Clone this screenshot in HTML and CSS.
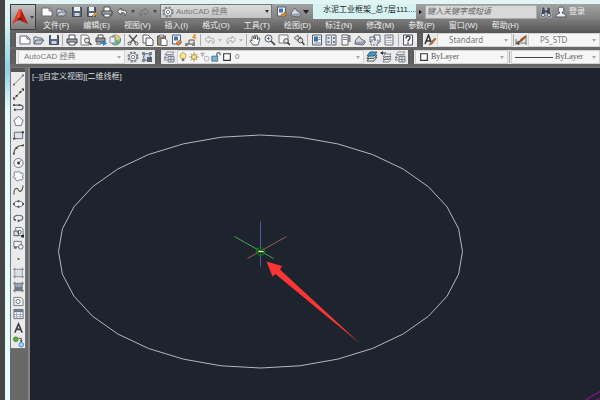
FILE: index.html
```
<!DOCTYPE html>
<html lang="zh-CN">
<head>
<meta charset="utf-8">
<title>AutoCAD</title>
<link rel="stylesheet" href="styles.css">
</head>
<body>
<svg class="sprite" aria-hidden="true">
  <symbol id="new" viewBox="0 0 12 12"><path d="M1 2h7l3 3v5H1z" fill="#fdfdfd" stroke="#666b76"/><path d="M8 2v3h3" fill="none" stroke="#666b76"/></symbol>
  <symbol id="open" viewBox="0 0 12 12"><path d="M1 10V3h3l1 1h4v2" fill="#dfe3ea" stroke="#596273"/><path d="M1 10l2-4h8l-3 4z" fill="#c3cad6" stroke="#596273"/></symbol>
  <symbol id="save" viewBox="0 0 12 12"><path d="M1.500 1.500h9v9h-9z" fill="#56657b" stroke="#3d4a5e"/><path d="M3 1h6v4H3z" fill="#eef1f5"/><path d="M3.500 7h5v3h-5z" fill="#cbd2dc"/></symbol>
  <symbol id="saveas" viewBox="0 0 12 12"><path d="M1.500 1.500h8v9h-8z" fill="#56657b" stroke="#3d4a5e"/><path d="M3 1h5v4H3zM3 7h5v3H3z" fill="#eef1f5"/><path d="M6 10l4-4 1.500 1.500-4 3.500z" fill="#e7a83e" stroke="#8b5a20" stroke-width=".5"/></symbol>
  <symbol id="print" viewBox="0 0 12 12"><path d="M3 5V1h6v4" fill="#fff" stroke="#4b4f57"/><path d="M1 5h10v4H1z" fill="#9da2ab" stroke="#3f434b"/><path d="M3 8h6v3H3z" fill="#fff" stroke="#4b4f57"/></symbol>
  <symbol id="preview" viewBox="0 0 12 12"><path d="M1 1h6l2 2v8H1z" fill="#fff" stroke="#777"/><circle cx="7" cy="6.500" r="2.500" fill="#dbe5ee" stroke="#4e545e"/><path d="M9 8.500l2.500 2.500" stroke="#444" stroke-width="1.500"/></symbol>
  <symbol id="publish" viewBox="0 0 12 12"><path d="M3 4V1h5v3" fill="#fff" stroke="#555"/><path d="M1 4h9v4H1z" fill="#8e949e" stroke="#444"/><path d="M1 10h5" stroke="#555"/><path d="M6 8h2V6l4 3.500L8 12v-2H6z" fill="#2b83cf"/></symbol>
  <symbol id="globe" viewBox="0 0 12 12"><circle cx="6.500" cy="6" r="5" fill="#8ec7de" stroke="#657780"/><path d="M6 1c3 0 5 2 5 4L7 6z" fill="#f0cf5c"/><path d="M7 6l4 1c0 2-2 4-4 4z" fill="#68ad6b"/><path d="M1 3h5v6H1z" fill="#eef1f5" stroke="#687079" stroke-width=".7"/></symbol>
  <symbol id="cut" viewBox="0 0 12 12"><path d="M2 1l7 8M10 1L3 9" stroke="#4a4e56" stroke-width="1.300"/><circle cx="2.500" cy="9.500" r="1.500" fill="none" stroke="#555"/><circle cx="9.500" cy="9.500" r="1.500" fill="none" stroke="#555"/></symbol>
  <symbol id="copy" viewBox="0 0 12 12"><path d="M1 1h5l2 2v6H1z" fill="#fff" stroke="#666"/><path d="M4 4h5l2 2v5.500H4z" fill="#fff" stroke="#555"/></symbol>
  <symbol id="paste" viewBox="0 0 12 12"><path d="M1.500 2h8v9h-8z" fill="#998a78" stroke="#5f5a55"/><path d="M3.500 1h4v2h-4z" fill="#ddd" stroke="#666" stroke-width=".7"/><path d="M5 4.500h4l2 2v5H5z" fill="#fff" stroke="#666"/></symbol>
  <symbol id="match" viewBox="0 0 12 12"><path d="M1.500 1h8v9h-8z" fill="#f5f7fa" stroke="#4b5e7c"/><path d="M3 2.500h4v4H3z" fill="#3c76b5"/><path d="M5 9l4-3 2 2-4 3.500z" fill="#dd8b35" stroke="#875228" stroke-width=".6"/></symbol>
  <symbol id="block" viewBox="0 0 12 12"><path d="M1 10h8V6H4v4" fill="none" stroke="#555"/><path d="M0 9h3v3H0zM7 9h3v3H7z" fill="#888"/><path d="M9 0L7 4h2L8 7l4-4h-2l1-3z" fill="#e99b3e"/></symbol>
  <symbol id="undo" viewBox="0 0 12 12"><path d="M5 2L1 5.500 5 9V7c3-1 4 0 4 3 3-4 1-6-4-6z" fill="#eee" stroke="currentColor"/></symbol>
  <symbol id="redo" viewBox="0 0 12 12"><path d="M7 2l4 3.500L7 9V7c-3-1-4 0-4 3-3-4-1-6 4-6z" fill="none" stroke="currentColor"/></symbol>
  <symbol id="hand" viewBox="0 0 12 12"><path d="M4 11L1 7c0-1 1-1 2 0V3c0-1 1-1 1.500 0L5 5V2c0-1 1.300-1 1.500 0v3L7 2c.2-1 1.500-1 1.500 0v4l1-2c.7-1 1.500 0 1.300 1L9 11z" fill="#f8f8f8" stroke="#4d525c" stroke-width=".9"/></symbol>
  <symbol id="zoom" viewBox="0 0 12 12"><circle cx="4.500" cy="4.500" r="3.500" fill="#e4ebf1" stroke="#59616e"/><path d="M3 4.500h3M4.500 3v3" stroke="#59616e" stroke-width=".8"/><path d="M7 7l4 4" stroke="#444" stroke-width="1.700"/></symbol>
  <symbol id="zoomwin" viewBox="0 0 12 12"><path d="M1 1h9v8H1z" fill="#fafafa" stroke="#777"/><circle cx="8" cy="7" r="2.300" fill="#dde4eb" stroke="#555"/><path d="M9.500 8.500L12 11" stroke="#333" stroke-width="1.500"/></symbol>
  <symbol id="zoomprev" viewBox="0 0 12 12"><path d="M5 1L1 4l4 3V5h3V3H5z" fill="#ddd" stroke="#555" stroke-width=".8"/><circle cx="7.500" cy="6.500" r="2.300" fill="#dde4eb" stroke="#555"/><path d="M9 8l2.500 3" stroke="#444" stroke-width="1.500"/></symbol>
  <symbol id="props" viewBox="0 0 12 12"><path d="M1.500 1h9v10h-9z" fill="#f5f7fa" stroke="#536177"/><path d="M3 2.500h4v5H3z" fill="#3573ac"/><path d="M7.500 3.500h2M7.500 5.500h2M3 9h6.500" stroke="#667" stroke-width=".8"/></symbol>
  <symbol id="design" viewBox="0 0 12 12"><path d="M1 1h10v10H1z" fill="#e0e4ea" stroke="#666d79"/><path d="M2.500 3h2v2h-2zM6 2h1v8H6zM8 3h2v2H8zM2.500 7h2v2h-2zM8 7h2v2H8z" fill="#7c8696"/></symbol>
  <symbol id="palette" viewBox="0 0 12 12"><path d="M2 1h6v10H2z" fill="#f5f5f5" stroke="#666"/><path d="M8 1h2.500v7H8zM3 3h4v1H3zM3 5h4v1H3z" fill="#7b818b"/></symbol>
  <symbol id="sheet" viewBox="0 0 12 12"><path d="M1 7l4-5 2 3 4 2-3 2H3z" fill="#d7dce3" stroke="#656c78"/><path d="M1 8v2l8 1 2-2V7" fill="#9ea6b1" stroke="#656c78"/></symbol>
  <symbol id="markup" viewBox="0 0 12 12"><path d="M1 3h5v5H1zM5 1h6v7H5z" fill="#f7f7f7" stroke="#5d6572"/><path d="M2 6h7v5H2z" fill="#dde2ea" stroke="#5d6572" stroke-dasharray="2 1"/></symbol>
  <symbol id="calc" viewBox="0 0 12 12"><path d="M2 1h8v10H2z" fill="#f2f3f5" stroke="#6c727c"/><path d="M3.500 2.500h5v2h-5z" fill="#8c98aa"/><path d="M3.500 6.500h5M3.500 8.500h5" stroke="#777" stroke-dasharray="1 1"/></symbol>
  <symbol id="gear" viewBox="0 0 12 12"><circle cx="6" cy="6" r="4.700" fill="none" stroke="#7d828a" stroke-width="1.800" stroke-dasharray="2.200 1.490"/><circle cx="6" cy="6" r="3.900" fill="#f3f3f3" stroke="#7d828a"/><circle cx="6" cy="6" r="1.700" fill="#fff" stroke="#7d828a"/></symbol>
  <symbol id="wsave" viewBox="0 0 12 12"><path d="M1 1h3v3H1zM8 1h3v3H8zM1 8h3v3H1z" fill="#7a8594"/><circle cx="6" cy="6" r="3.500" fill="#d6dce3" stroke="#5d6571"/><path d="M6 6h5v5H6z" fill="#53647b"/></symbol>
  <symbol id="layers" viewBox="0 0 12 12"><path d="M4 1h7L9 3.500H2zM4 4h7" fill="#f5f5f5" stroke="#707783" stroke-width=".8"/><path d="M4 4L1 6.500h3M2.500 7L1 9h3" fill="none" stroke="#707783" stroke-width=".8"/><path d="M5 5.500h6V11H5z" fill="#d9e5ec" stroke="#606773" stroke-width=".8"/><path d="M5 8.500h6M8 6v5" stroke="#606773" stroke-width=".7"/></symbol>
  <symbol id="layerblue" viewBox="0 0 12 12"><path d="M4 6h7l-3 4H1z" fill="#f5f5f5" stroke="#555"/><path d="M4 4h7L8 7.500H1z" fill="#ccd8e1" stroke="#555"/><path d="M4 1h7L8 5H1z" fill="#3f9bd0" stroke="#315c7a"/></symbol>
  <symbol id="layerprev" viewBox="0 0 12 12"><path d="M5 8h6l-2 3H3zM5 5.500h6l-2 3H3zM5 3h6L9 6H3z" fill="#f5f5f5" stroke="#606773" stroke-width=".8"/><path d="M0 2l3-2v1.500h3v1H3V4z" fill="#333"/></symbol>
  <symbol id="help" viewBox="0 0 12 12"><path d="M1.500 1h9v10h-9z" fill="#f7f7f7" stroke="#4a525e"/><path d="M4 4.500c0-3 4-3 4-.5C8 5.500 6 5.500 6 7.500M6 8.500V10" fill="none" stroke="#303641" stroke-width="1.300"/></symbol>
  <symbol id="textstyle" viewBox="0 0 12 12"><path d="M1 10L4.500 1 7 8M2.500 7H6" fill="none" stroke="#30343b" stroke-width="1.500"/><path d="M5 11l2-3 4-4 1 1-4 5z" fill="#b87033" stroke="#70401f" stroke-width=".5"/></symbol>
  <symbol id="dimstyle" viewBox="0 0 12 12"><path d="M1 5v6M11 1v10M1 9h10M1 9l3-2v4z" fill="#555" stroke="#555" stroke-width=".8"/><path d="M4 8l2-3 4-3 1 1-4 4z" fill="#b85b22" stroke="#7a3f1d" stroke-width=".6"/></symbol>
  <symbol id="bulb" viewBox="0 0 12 12"><path d="M4 8C1 5 3 1 6 1s5 4 2 7z" fill="#ffe784" stroke="#887637" stroke-width=".8"/><path d="M4.500 8h3v3h-3z" fill="#777"/></symbol>
  <symbol id="sun" viewBox="0 0 12 12"><path d="M6 0v12M0 6h12M2 2l8 8M10 2l-8 8" stroke="#a58d4b"/><circle cx="6" cy="6" r="3" fill="#f9e388" stroke="#9a8548"/></symbol>
  <symbol id="freeze" viewBox="0 0 12 12"><path d="M0 2h6M3 0v6M1 1l4 4M5 1L1 5" stroke="#aaa"/><circle cx="8" cy="8" r="3" fill="#eee" stroke="#aaa"/></symbol>
  <symbol id="lock" viewBox="0 0 12 12"><path d="M7 6V3c0-3 4-3 4 0v1" fill="none" stroke="#526472" stroke-width="1.400"/><path d="M1 5h7v6H1z" fill="#78b6d6" stroke="#42677d"/></symbol>
  <symbol id="swatch" viewBox="0 0 12 12"><path d="M2 2h8v8H2z" fill="#fff" stroke="#333" stroke-width="1.300"/></symbol>
  <symbol id="binoculars" viewBox="0 0 12 12"><path d="M2 1h3v3h2V1h3l1.500 10H7V7H5v4H.5z" fill="#424b5b" stroke="#dfe3e8" stroke-width=".6"/><path d="M2 8h2v2H2zM8 8h2v2H8z" fill="#d7dce3"/></symbol>
  <symbol id="person" viewBox="0 0 12 12"><path d="M1 11c0-3 2-3 4-4C2 4 3 1 6 1s4 3 1 6c2 1 4 1 4 4z" fill="#eef1f5" stroke="#4c5768"/></symbol>
  <symbol id="line" viewBox="0 0 12 12"><path d="M1 11L11 1" stroke="#777"/><path d="M0 10h2v2H0zM10 0h2v2h-2z" fill="#666"/></symbol>
  <symbol id="xline" viewBox="0 0 12 12"><path d="M1 11L11 1" stroke="#555"/><path d="M3 7h2v2H3zM7 3h2v2H7zM0 12V9l3 3zM12 0v3L9 0z" fill="#333"/></symbol>
  <symbol id="pline" viewBox="0 0 12 12"><path d="M1 4h7c4 0 4 5 0 5H2" fill="none" stroke="#596273" stroke-width="1.200"/><path d="M0 3h2v2H0zM1 8h2v2H1zM6 3h2v2H6z" fill="#444"/></symbol>
  <symbol id="polygon" viewBox="0 0 12 12"><path d="M6 1l5 4-2 6H3L1 5z" fill="#f7f8fa" stroke="#69707c"/></symbol>
  <symbol id="rect" viewBox="0 0 12 12"><path d="M1.500 3h9v7h-9z" fill="#dfe4ea" stroke="#596273"/><path d="M0 9h2.500v2H0zM9.500 2H12v2H9.500z" fill="#444"/></symbol>
  <symbol id="arc" viewBox="0 0 12 12"><path d="M1 11c0-5 3-9 10-9" fill="none" stroke="#555" stroke-width="1.200"/><path d="M0 10h2v2H0zM3 4h2v2H3zM10 1h2v2h-2z" fill="#444"/></symbol>
  <symbol id="circle" viewBox="0 0 12 12"><circle cx="6" cy="6" r="5" fill="#f6f7f9" stroke="#686f7b"/><path d="M6 6l3-3M5 5h2v2H5z" stroke="#555"/></symbol>
  <symbol id="cloud" viewBox="0 0 12 12"><path d="M4 2c3-2 4 0 4 1 4-1 4 2 2 3 2 3 0 5-3 4-2 3-5 0-4-1-4-1-2-4-1-4C0 3 2 0 4 2z" fill="#f7f8fa" stroke="#69707c"/></symbol>
  <symbol id="spline" viewBox="0 0 12 12"><path d="M1 11C1 2 5 4 6 6s4 3 5-5" fill="none" stroke="#555" stroke-width="1.200"/></symbol>
  <symbol id="ellipse" viewBox="0 0 12 12"><ellipse cx="6" cy="6" rx="5" ry="3" fill="#f7f8fa" stroke="#5f6774"/><path d="M0 5h2v2H0zM10 5h2v2h-2zM5 2h2v2H5zM5 8h2v2H5z" fill="#555"/></symbol>
  <symbol id="earc" viewBox="0 0 12 12"><path d="M2 8C-1 5 3 3 6 3c6 0 6 5 1 6" fill="none" stroke="#5f6774" stroke-width="1.300"/><path d="M5 8h2v2H5zM1 7h2v2H1z" fill="#444"/></symbol>
  <symbol id="insert" viewBox="0 0 12 12"><path d="M3 1h6l2 2v7H3z" fill="#fafafa" stroke="#697180"/><path d="M1 5h5v5H1z" fill="#dce1e8" stroke="#555"/><circle cx="7" cy="6" r="2" fill="none" stroke="#555"/><path d="M9 9h3v3H9z" fill="#222"/></symbol>
  <symbol id="makeblock" viewBox="0 0 12 12"><path d="M1 2h8v6H1z" fill="#f5f5f5" stroke="#626b79"/><circle cx="8.500" cy="8" r="2.500" fill="#edf0f4" stroke="#626b79"/><path d="M1 8h3v2H1z" fill="#666"/></symbol>
  <symbol id="point" viewBox="0 0 12 12"><path d="M5 5h2v2H5z" fill="#555"/></symbol>
  <symbol id="hatch" viewBox="0 0 12 12"><path d="M2 2h8v8H2z" fill="#f3f3f3"/><path d="M2 0v12M10 0v12M0 2h12M0 10h12" stroke="#7d8490"/><path d="M3 6l3-3M3 9l6-6M6 9l3-3" stroke="#929aa6" stroke-width=".7"/></symbol>
  <symbol id="gradient" viewBox="0 0 12 12"><path d="M2 2h8v8H2z" fill="#9ba4b1"/><path d="M2 6h8v4H2z" fill="#707c8c"/><path d="M2 0v12M10 0v12M0 2h12M0 10h12" stroke="#6d7480"/></symbol>
  <symbol id="region" viewBox="0 0 12 12"><path d="M1 2h6c3 0 4 2 4 4v5H1z" fill="#eef0f3" stroke="#727b89"/><circle cx="5.500" cy="6.500" r="2.200" fill="#fff" stroke="#626b79"/></symbol>
  <symbol id="table" viewBox="0 0 12 12"><path d="M1 1h10v10H1z" fill="#fff" stroke="#5f6b7c"/><path d="M1 1h10v3H1z" fill="#6e7c90"/><path d="M1 6.500h10M1 9h10M4 4v7M8 4v7" stroke="#8a95a6" stroke-width=".8"/></symbol>
  <symbol id="mtext" viewBox="0 0 12 12"><path d="M2 11L6 1.500 10 11M3.500 7.500h5" fill="none" stroke="#3c3f45" stroke-width="1.700"/></symbol>
  <symbol id="addsel" viewBox="0 0 12 12"><circle cx="3" cy="3" r="2.700" fill="#5caa3b" stroke="#397626" stroke-width=".6"/><path d="M6 2h3v3M8 4l1 2 1-2" fill="none" stroke="#444"/><circle cx="9" cy="9" r="2.500" fill="#a6d9fa" stroke="#2d8bc9"/></symbol>
</svg>

<div class="desktop">
  <div class="window">
    <header class="head">
      <button class="app" aria-label="应用程序菜单">
        <svg class="logo" viewBox="0 0 16 18" aria-hidden="true"><path d="M7 1L0 16l5-3 3-5z" fill="#e33a25"/><path d="M7 1h2l7 15-5-2-4-7z" fill="#bd1d13"/><path d="M5 13l3-6 3 7-3-2z" fill="#7d0f0b"/><path d="M7 1L5 9l3 1 1-9z" fill="#f0513a"/></svg>
        <span class="caret"></span>
      </button>
      <div class="bars">
        <div class="titlebar">
          <div class="quick">
            <button aria-label="新建"><svg><use href="#new"/></svg></button>
            <button aria-label="打开"><svg><use href="#open"/></svg></button>
            <button aria-label="保存"><svg><use href="#save"/></svg></button>
            <button aria-label="另存为"><svg><use href="#saveas"/></svg></button>
            <button aria-label="打印"><svg><use href="#print"/></svg></button>
            <button class="history" aria-label="放弃"><svg><use href="#undo"/></svg></button>
            <span class="caret"></span>
            <button class="history next" aria-label="重做"><svg><use href="#redo"/></svg></button>
            <span class="caret"></span>
          </div>
          <div class="field workspace"><svg><use href="#gear"/></svg><select aria-label="工作空间"><option>AutoCAD 经典</option></select></div>
          <div class="extras">
            <button aria-label="特性匹配"><svg><use href="#match"/></svg></button>
            <button aria-label="图纸集"><svg><use href="#sheet"/></svg></button>
            <span class="caret big"></span>
          </div>
          <div class="title">水泥工业框架_总7层111....</div>
          <div class="info">
            <span class="play"></span>
            <input type="text" placeholder="键入关键字或短语" aria-label="搜索">
            <button aria-label="查找"><svg><use href="#binoculars"/></svg></button>
            <button class="login"><svg><use href="#person"/></svg>登录</button>
          </div>
        </div>
        <nav class="menu">
          <a href="#">文件(F)</a><a href="#">编辑(E)</a><a href="#">视图(V)</a><a href="#">插入(I)</a><a href="#">格式(O)</a><a href="#">工具(T)</a><a href="#">绘图(D)</a><a href="#">标注(N)</a><a href="#">修改(M)</a><a href="#">参数(P)</a><a href="#">窗口(W)</a><a href="#">帮助(H)</a>
        </nav>
      </div>
    </header>

    <div class="row">
      <div class="toolbar standard">
        <span class="grip"></span>
        <button aria-label="新建"><svg><use href="#new"/></svg></button>
        <button aria-label="打开"><svg><use href="#open"/></svg></button>
        <button aria-label="保存"><svg><use href="#save"/></svg></button>
        <span class="sep"></span>
        <button aria-label="打印"><svg><use href="#print"/></svg></button>
        <button aria-label="打印预览"><svg><use href="#preview"/></svg></button>
        <button aria-label="发布"><svg><use href="#publish"/></svg></button>
        <button aria-label="三维打印"><svg><use href="#globe"/></svg></button>
        <span class="sep"></span>
        <button aria-label="剪切"><svg><use href="#cut"/></svg></button>
        <button aria-label="复制"><svg><use href="#copy"/></svg></button>
        <button aria-label="粘贴"><svg><use href="#paste"/></svg></button>
        <button aria-label="特性匹配"><svg><use href="#match"/></svg></button>
        <button aria-label="块编辑器"><svg><use href="#block"/></svg></button>
        <span class="sep"></span>
        <button class="off" aria-label="放弃"><svg><use href="#undo"/></svg></button>
        <span class="caret pale"></span>
        <button class="off" aria-label="重做"><svg><use href="#redo"/></svg></button>
        <span class="caret pale"></span>
        <span class="sep"></span>
        <button aria-label="平移"><svg><use href="#hand"/></svg></button>
        <button aria-label="缩放"><svg><use href="#zoom"/></svg></button>
        <button aria-label="窗口缩放"><svg><use href="#zoomwin"/></svg></button>
        <button aria-label="缩放上一个"><svg><use href="#zoomprev"/></svg></button>
        <span class="sep"></span>
        <button aria-label="特性"><svg><use href="#props"/></svg></button>
        <button aria-label="设计中心"><svg><use href="#design"/></svg></button>
        <button aria-label="工具选项板"><svg><use href="#palette"/></svg></button>
        <button aria-label="图纸集"><svg><use href="#sheet"/></svg></button>
        <button aria-label="标记集"><svg><use href="#markup"/></svg></button>
        <button aria-label="计算器"><svg><use href="#calc"/></svg></button>
        <span class="sep"></span>
        <button aria-label="帮助"><svg><use href="#help"/></svg></button>
      </div>
      <div class="toolbar grow">
        <span class="grip"></span>
        <button aria-label="文字样式"><svg><use href="#textstyle"/></svg></button>
        <div class="field style"><select aria-label="文字样式"><option>Standard</option></select></div>
        <span class="sep"></span>
        <button aria-label="标注样式"><svg><use href="#dimstyle"/></svg></button>
        <div class="field style rest"><select aria-label="标注样式"><option>PS_STD</option></select></div>
      </div>
    </div>

    <div class="row">
      <div class="toolbar spaces">
        <span class="grip"></span>
        <div class="field rest"><select aria-label="工作空间"><option>AutoCAD 经典</option></select></div>
        <button aria-label="设置"><svg><use href="#gear"/></svg></button>
        <button aria-label="我的工作空间"><svg><use href="#wsave"/></svg></button>
      </div>
      <div class="toolbar layerbar">
        <span class="grip"></span>
        <button aria-label="图层特性"><svg><use href="#layers"/></svg></button>
        <div class="field rest states"><svg><use href="#bulb"/></svg><svg><use href="#sun"/></svg><svg><use href="#freeze"/></svg><svg><use href="#lock"/></svg><svg><use href="#swatch"/></svg><select aria-label="图层"><option>0</option></select></div>
        <button aria-label="置为当前"><svg><use href="#layerblue"/></svg></button>
        <button aria-label="上一个图层"><svg><use href="#layerprev"/></svg></button>
        <button aria-label="图层状态"><svg><use href="#layers"/></svg></button>
      </div>
      <div class="toolbar grow">
        <span class="grip"></span>
        <div class="field color"><svg><use href="#swatch"/></svg><select aria-label="颜色"><option>ByLayer</option></select></div>
        <span class="sep"></span>
        <div class="field linetype rest"><span class="stroke"></span><select aria-label="线型"><option>ByLayer</option></select></div>
      </div>
    </div>

    <main class="work">
      <div class="draw">
        <span class="handle"></span>
        <button aria-label="直线"><svg><use href="#line"/></svg></button>
        <button aria-label="构造线"><svg><use href="#xline"/></svg></button>
        <button aria-label="多段线"><svg><use href="#pline"/></svg></button>
        <button aria-label="多边形"><svg><use href="#polygon"/></svg></button>
        <button aria-label="矩形"><svg><use href="#rect"/></svg></button>
        <button aria-label="圆弧"><svg><use href="#arc"/></svg></button>
        <button aria-label="圆"><svg><use href="#circle"/></svg></button>
        <button aria-label="修订云线"><svg><use href="#cloud"/></svg></button>
        <button aria-label="样条曲线"><svg><use href="#spline"/></svg></button>
        <button aria-label="椭圆"><svg><use href="#ellipse"/></svg></button>
        <button aria-label="椭圆弧"><svg><use href="#earc"/></svg></button>
        <button aria-label="插入块"><svg><use href="#insert"/></svg></button>
        <button aria-label="创建块"><svg><use href="#makeblock"/></svg></button>
        <button aria-label="点"><svg><use href="#point"/></svg></button>
        <button aria-label="图案填充"><svg><use href="#hatch"/></svg></button>
        <button aria-label="渐变色"><svg><use href="#gradient"/></svg></button>
        <button aria-label="面域"><svg><use href="#region"/></svg></button>
        <button aria-label="表格"><svg><use href="#table"/></svg></button>
        <button aria-label="多行文字"><svg><use href="#mtext"/></svg></button>
        <button aria-label="添加选定对象"><svg><use href="#addsel"/></svg></button>
      </div>
      <section class="canvas">
        <div class="viewlabel">[–][自定义视图][二维线框]</div>
        <svg class="drawing" viewBox="30 68 570 332" preserveAspectRatio="xMinYMin slice" aria-hidden="true">
          <g transform="translate(260.500 251.500)" fill="none">
            <path stroke="#b4b8bb" stroke-width="1" d="M0-116.500L39.400-114.300 77.300-107.600 112.200-96.900 142.800-82.400 168-64.700 186.600-44.600 198.100-22.700 202 0 198.100 22.700 186.600 44.600 168 64.700 142.800 82.400 112.200 96.900 77.300 107.600 39.400 114.300 0 116.500-39.400 114.300-77.300 107.600-112.200 96.900-142.800 82.400-168 64.700-186.600 44.600-198.100 22.700-202 0-198.100-22.700-186.600-44.600-168-64.700-142.800-82.400-112.200-96.900-77.300-107.600-39.400-114.300z"/>
            <path stroke="#5654b0" d="M0-30V15"/>
            <path stroke="#4fa356" d="M-26-15L13 7"/>
            <path stroke="#a4585f" d="M26-15L-13 7"/>
            <circle r="4" stroke="#087d18"/>
            <path stroke="#087d18" d="M-5 0H5M0-5V5"/>
            <path stroke="#f2e9b0" d="M-2 0H3"/>
          </g>
          <path fill="#ff3434" d="M266.500 261.500L282 266 280 269.500 320 306.500 360 343.500 316 307.500 275.500 274 272.500 276.500z"/>
          <path stroke="#8a1292" stroke-width="1.200" fill="none" d="M585 400.500L600 391.500M595 401L600 398"/>
        </svg>
      </section>
    </main>
  </div>
</div>
</body>
</html>
```
FILE: styles.css
```
* { box-sizing: border-box; }

body {
  margin: 0;
  height: 100vh;
  overflow: hidden;
  font-family: "Liberation Sans", "Noto Sans CJK SC", sans-serif;
  font-size: 8px;
  line-height: 12px;
  color: #777;
}

button, input, select {
  font: inherit;
  color: inherit;
  border: 0;
  margin: 0;
  padding: 0;
  background: none;
  appearance: none;
}

svg { display: block; flex: none; width: 12px; height: 12px; }
.sprite { position: absolute; width: 0; height: 0; }

.desktop {
  height: 100%;
  padding-left: 5px;
  background: #454545;
}

.window {
  height: 100%;
  display: flex;
  flex-direction: column;
  padding: 4px 0 0 5px;
  background: linear-gradient(#e3f5f4, #d8f5f5 20px, #8fd0ea 70px, #e4fcfc 110px);
}

.head { display: flex; height: 29px; }

.app {
  display: flex;
  align-items: center;
  justify-content: center;
  gap: 2px;
  width: 26px;
  height: 26px;
  border: 1px solid #3d3d3d;
  background: linear-gradient(#c4c4c4, #7c7c7c);
  box-shadow: 0 3px #666;
}
.logo { width: 16px; height: 18px; }

.caret {
  flex: none;
  width: 4px;
  border: 2px solid transparent;
  border-top: 3px solid #444;
  border-bottom: 0;
}
.caret.pale { border-top-color: #bbb; }
.caret.big { width: 6px; border-width: 4px 3px 0; border-top-color: #222; }

.bars { flex: 1; min-width: 0; }

.titlebar { display: flex; height: 15px; }

.quick, .extras, .info {
  display: flex;
  align-items: center;
  background: linear-gradient(#a2a2a2, #808080);
}
.quick { width: 124px; padding: 0 3px 0 5px; justify-content: space-between; }
.extras { width: 41px; padding: 0 4px; justify-content: space-between; }
.history { color: #555; }
.history.next { color: #737373; }

.field {
  display: flex;
  align-items: center;
  align-self: stretch;
  gap: 2px;
  padding: 0 3px;
  background: #f6f6f6;
  border: 1px solid #d3d3d3;
}
.field::after {
  content: "";
  flex: none;
  border: 2px solid transparent;
  border-top: 3px solid #aaa;
  border-bottom: 0;
}
.field select { flex: 1; min-width: 0; height: 12px; }

.workspace {
  width: 112px;
  padding: 0 2px 0 1px;
  background: linear-gradient(#dcdcdc, #c4c4c4);
  border-color: #777;
}
.workspace::after { border-top-color: #333; }

.title {
  flex: none;
  width: 103px;
  padding-left: 10px;
  background: #d6f2f3;
  color: #222;
  white-space: nowrap;
}

.info { flex: 1; min-width: 0; gap: 3px; padding-left: 3px; color: #eee; }
.play {
  border: 2px solid transparent;
  border-left: 3px solid #111;
  border-right: 0;
}
.info input {
  width: 112px;
  height: 14px;
  padding: 0 1px;
  background: #d9d9d9;
  border: 1px solid #aaa;
}
.info input::placeholder { color: #666; font-style: italic; opacity: 1; }
.login { display: flex; align-items: center; gap: 2px; }

.menu {
  display: flex;
  gap: 14px;
  height: 14px;
  padding-left: 7px;
  background: linear-gradient(#7d7d7d, #555);
}
.menu a { flex: none; color: #eee; text-decoration: none; line-height: 14px; white-space: nowrap; }

.row {
  display: flex;
  height: 17px;
  padding-bottom: 3px;
  background: #686868;
}

.toolbar {
  display: flex;
  flex: none;
  align-items: center;
  gap: 2px;
  background: #ebebeb;
}
.standard { width: 407px; padding-right: 3px; gap: 0; justify-content: space-between; }
.spaces { width: 145px; padding-right: 2px; }
.layerbar { width: 253px; padding-right: 2px; }
.toolbar.grow { flex: 1; min-width: 0; gap: 1px; }

.grip {
  flex: none;
  align-self: stretch;
  width: 6px;
  background: repeating-linear-gradient(#555 0 1px, #6e6e6e 1px 2px);
  border: solid #5c5c5c;
  border-width: 0 2px;
}
.sep { flex: none; width: 1px; height: 12px; background: #aaa; }
.off { color: #aaa; }

.field.rest { flex: 1; min-width: 0; }
.style { width: 75px; }
.style select { padding-left: 8px; font-family: "Noto Sans", sans-serif; }
.color { width: 93px; }
.color select, .linetype select { font-family: "Liberation Serif", serif; color: #555; }
.states { gap: 1px; padding-left: 0; }
.states select { padding-left: 2px; }
.states svg, .color svg { width: 10px; height: 10px; }
.spaces select { padding-left: 2px; }
.stroke { flex: none; width: 38px; height: 1px; background: #444; }

.work {
  flex: 1;
  min-height: 0;
  display: flex;
  align-items: flex-start;
  border-top: 1px solid #777;
  background: #686868;
}

.draw {
  flex: none;
  display: flex;
  flex-direction: column;
  align-items: center;
  justify-content: space-between;
  width: 16px;
  height: 281px;
  background: #ebebeb;
  border: 1px solid #777;
  border-top: 0;
}
.draw .handle { width: 100%; height: 4px; background: #555; }
.draw svg { width: 11px; height: 12px; }

.canvas {
  flex: 1;
  align-self: stretch;
  min-width: 0;
  position: relative;
  margin-left: 2px;
  border-left: 2px solid #858585;
  background: #1d242d;
}
.viewlabel { position: absolute; top: 3px; left: 2px; color: #ddd; white-space: nowrap; }
.drawing { width: 100%; height: 100%; }
```
